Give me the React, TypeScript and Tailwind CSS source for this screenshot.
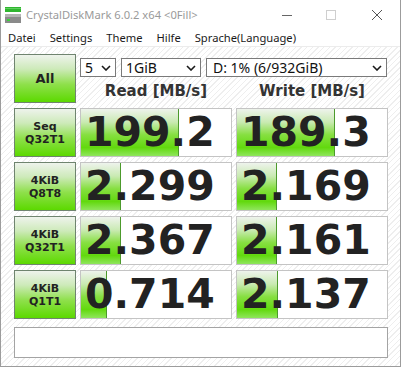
import React from "react";

type Result = {
  label: string[];
  read: string;
  write: string;
  readFill: number;
  writeFill: number;
};

const results: Result[] = [
  { label: ["Seq", "Q32T1"], read: "199.2", write: "189.3", readFill: 98, writeFill: 98 },
  { label: ["4KiB", "Q8T8"], read: "2.299", write: "2.169", readFill: 40, writeFill: 40 },
  { label: ["4KiB", "Q32T1"], read: "2.367", write: "2.161", readFill: 40, writeFill: 40 },
  { label: ["4KiB", "Q1T1"], read: "0.714", write: "2.137", readFill: 26, writeFill: 41 },
];

const greenButton =
  "border border-[#6f846f] bg-[linear-gradient(to_bottom,#eef3ec_0%,#cdeab9_30%,#8fe04c_62%,#5cd900_100%)]";

const Chevron = () => (
  <svg width="10" height="6" viewBox="0 0 10 6" className="shrink-0">
    <path d="M1 1 L5 5 L9 1" fill="none" stroke="#1a1a1a" strokeWidth="1.6" />
  </svg>
);

const Select = ({ value, className }: { value: string; className: string }) => (
  <div
    className={`flex items-center justify-between h-[19px] border border-[#7a7a7a] bg-white pl-[4px] pr-[4px] text-[14px] leading-none text-[#111] font-['Noto_Sans',sans-serif] ${className}`}
  >
    <span>{value}</span>
    <Chevron />
  </div>
);

const ValueCell = ({ value, fill }: { value: string; fill: number }) => (
  <div className="relative h-[49px] border border-[#c4c4c4] bg-white overflow-hidden">
    <div
      className="absolute left-0 top-0 bottom-0 border-r border-[#4c9a2c] bg-[linear-gradient(to_bottom,#eef3ec_0%,#c9eab2_28%,#86df40_55%,#62d90e_82%,#8fe65c_100%)]"
      style={{ width: fill }}
    />
    <div className="relative flex h-full items-center pl-[4px] font-['DejaVu_Sans',sans-serif] font-bold text-[41px] leading-none text-[#222]">
      {value}
    </div>
  </div>
);

const App = () => {
  return (
    <div className="w-[401px] h-[367px] flex flex-col bg-white border-x border-b border-[#9c9c9c] font-['Noto_Sans',sans-serif]">
      <div className="h-[30px] flex items-center shrink-0">
        <svg width="16" height="16" viewBox="0 0 16 16" className="ml-[4px]">
          <rect x="0" y="0" width="16" height="5" fill="#2fb52f" />
          <rect x="0" y="1" width="16" height="1" fill="#5fd05f" />
          <rect x="0" y="7" width="16" height="9" fill="#8a8a8a" />
          <rect x="0" y="7" width="16" height="3" fill="#b4b4b4" />
          <rect x="2" y="12" width="3" height="2" fill="#39d139" />
        </svg>
        <span className="ml-[5px] text-[11.2px] text-[#9a9a9a]">CrystalDiskMark 6.0.2 x64 &lt;0Fill&gt;</span>
        <div className="ml-auto flex items-center h-full">
          <div className="w-[10px] h-px bg-[#666] mr-[34px]" />
          <div className="w-[10px] h-[10px] border border-[#cfcfcf] mr-[35px]" />
          <svg width="12" height="12" viewBox="0 0 12 12" className="mr-[17px]">
            <path d="M1 1 L11 11 M11 1 L1 11" stroke="#555" strokeWidth="1" />
          </svg>
        </div>
      </div>
      <div className="h-[17px] flex items-center gap-[14px] pl-[7px] text-[11.2px] text-[#1a1a1a] border-b border-[#ececec] shrink-0">
        <span>Datei</span>
        <span>Settings</span>
        <span>Theme</span>
        <span>Hilfe</span>
        <span>Sprache(Language)</span>
      </div>
      <div className="flex-1 pl-[13px] pt-[7px] bg-[repeating-linear-gradient(135deg,#eeeeee_0px,#eeeeee_1px,#ffffff_1px,#ffffff_4px)]">
        <div className="grid grid-cols-[62px_152px_152px] gap-x-[4px]">
          <div
            className={`h-[49px] flex items-center justify-center font-['DejaVu_Sans',sans-serif] font-bold text-[13px] text-[#222] ${greenButton}`}
          >
            All
          </div>
          <div className="col-span-2 flex flex-col">
            <div className="flex mt-[4px]">
              <Select value="5" className="w-[36px]" />
              <Select value="1GiB" className="w-[80px] ml-[5px]" />
              <Select value="D: 1% (6/932GiB)" className="w-[181px] ml-[5px] pl-[6px]" />
            </div>
            <div className="grid grid-cols-2 gap-x-[4px] flex-1 items-center font-['DejaVu_Sans',sans-serif] font-bold text-[15px] text-[#333] text-center pt-[2px]">
              <span>Read [MB/s]</span>
              <span>Write [MB/s]</span>
            </div>
          </div>
        </div>
        <div className="grid grid-cols-[62px_152px_152px] gap-x-[4px] gap-y-[5px] mt-[5px]">
          {results.map((r) => (
            <React.Fragment key={r.label.join("-")}>
              <div
                className={`h-[49px] flex flex-col items-center justify-center font-['DejaVu_Sans',sans-serif] font-bold text-[11px] leading-[13px] text-[#222] ${greenButton}`}
              >
                <span>{r.label[0]}</span>
                <span>{r.label[1]}</span>
              </div>
              <ValueCell value={r.read} fill={r.readFill} />
              <ValueCell value={r.write} fill={r.writeFill} />
            </React.Fragment>
          ))}
        </div>
        <div className="mt-[8px] w-[374px] h-[31px] border border-[#a4a4a4] bg-white" />
      </div>
    </div>
  );
};

export default App;
